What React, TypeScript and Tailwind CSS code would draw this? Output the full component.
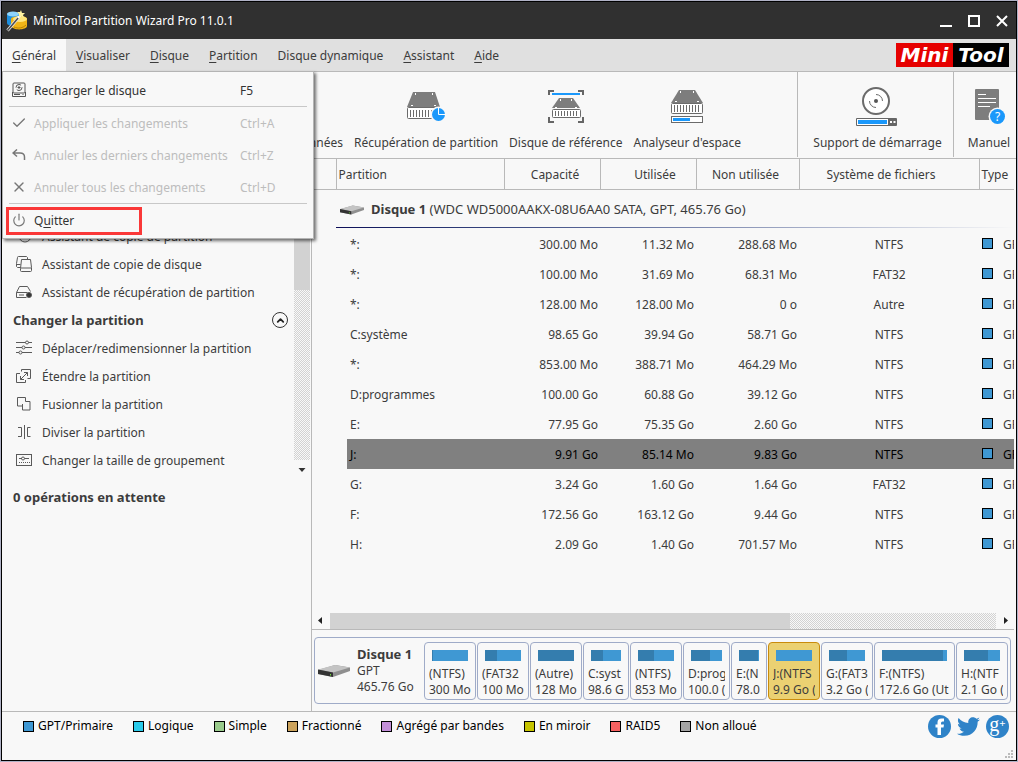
import React from 'react';
import { Check, ChevronUp, Power, X } from 'lucide-react';
import { FaTwitter } from 'react-icons/fa';

interface Volume {
  name: string;
  capacity: string;
  used: string;
  free: string;
  fs: string;
  selected?: boolean;
}

interface Block {
  name: string;
  size: string;
  grow: number;
  used: number;
  selected?: boolean;
}

const volumes: Volume[] = [
  { name: '*:', capacity: '300.00 Mo', used: '11.32 Mo', free: '288.68 Mo', fs: 'NTFS' },
  { name: '*:', capacity: '100.00 Mo', used: '31.69 Mo', free: '68.31 Mo', fs: 'FAT32' },
  { name: '*:', capacity: '128.00 Mo', used: '128.00 Mo', free: '0 o', fs: 'Autre' },
  { name: 'C:système', capacity: '98.65 Go', used: '39.94 Go', free: '58.71 Go', fs: 'NTFS' },
  { name: '*:', capacity: '853.00 Mo', used: '388.71 Mo', free: '464.29 Mo', fs: 'NTFS' },
  { name: 'D:programmes', capacity: '100.00 Go', used: '60.88 Go', free: '39.12 Go', fs: 'NTFS' },
  { name: 'E:', capacity: '77.95 Go', used: '75.35 Go', free: '2.60 Go', fs: 'NTFS' },
  { name: 'J:', capacity: '9.91 Go', used: '85.14 Mo', free: '9.83 Go', fs: 'NTFS', selected: true },
  { name: 'G:', capacity: '3.24 Go', used: '1.60 Go', free: '1.64 Go', fs: 'FAT32' },
  { name: 'F:', capacity: '172.56 Go', used: '163.12 Go', free: '9.44 Go', fs: 'NTFS' },
  { name: 'H:', capacity: '2.09 Go', used: '1.40 Go', free: '701.57 Mo', fs: 'NTFS' },
];

// grow is the relative width of the block, used is a percentage
const blocks: Block[] = [
  { name: '(NTFS)', size: '300 Mo', grow: 52, used: 3 },
  { name: '(FAT32', size: '100 Mo', grow: 52, used: 32 },
  { name: '(Autre)', size: '128 Mo', grow: 52, used: 100 },
  { name: 'C:syst', size: '98.6 G', grow: 46, used: 40 },
  { name: '(NTFS)', size: '853 Mo', grow: 52, used: 45 },
  { name: 'D:prog', size: '100.0 (', grow: 47, used: 61 },
  { name: 'E:(N', size: '78.0', grow: 36, used: 97 },
  { name: 'J:(NTFS', size: '9.9 Go (', grow: 52, used: 0, selected: true },
  { name: 'G:(FAT3', size: '3.2 Go (', grow: 52, used: 50 },
  { name: 'F:(NTFS)', size: '172.6 Go (Ut', grow: 81, used: 94 },
  { name: 'H:(NTF', size: '2.1 Go (', grow: 52, used: 67 },
];

const legend = [
  { label: 'GPT/Primaire', color: 'bg-[#3f98d3]' },
  { label: 'Logique', color: 'bg-[#2bcbea]' },
  { label: 'Simple', color: 'bg-[#9acb8c]' },
  { label: 'Fractionné', color: 'bg-[#cca35c]' },
  { label: 'Agrégé par bandes', color: 'bg-[#c38fd9]' },
  { label: 'En miroir', color: 'bg-[#c6c400]' },
  { label: 'RAID5', color: 'bg-[#f66161]' },
  { label: 'Non alloué', color: 'bg-[#a4a4a4]' },
];

const menus = ['Visualiser', 'Disque', 'Partition', 'Disque dynamique', 'Assistant', 'Aide'];

function AppIcon() {
  return (
    <svg width="22" height="22" viewBox="0 0 22 22">
      <path d="M1 5c0-3 12-5 12 0v9c-4 3-12 2-12-1z" fill="#1d8fe0" />
      <ellipse cx="7" cy="4" rx="6" ry="2.6" fill="#8fd4fb" />
      <path d="M5 9c0-3 16-4 16 0v7c0 4-14 5-16 0z" fill="#f0b517" />
      <ellipse cx="14" cy="9" rx="7" ry="3" fill="#ffe67a" />
      <path d="M8 17c4 2 9 1 12-2" stroke="#b98200" fill="none" />
      <path d="M1.500 20.500L13 7" stroke="#e8e8e8" strokeWidth="3" />
      <path d="M1.500 20.500L13 7" stroke="#4d4d4d" strokeWidth="1.500" />
      <path d="M12 8l3-3.500" stroke="#fff" strokeWidth="2" />
      <path d="M15 0l1 3 3 0-2 2 1 3-3-2-2 1 0-3-2-2 3 0z" fill="#fff3a0" />
    </svg>
  );
}

function Bars({ x, y, count, height }: { x: number; y: number; count: number; height: number }) {
  return (
    <>
      {Array.from({ length: count }, (_, i) => (
        <rect key={i} x={x + i * 3} y={y} width="1" height={height} fill="#6b6b6b" />
      ))}
    </>
  );
}

function RecoverIcon() {
  return (
    <svg width="40" height="40" viewBox="0 0 40 40">
      <path d="M7 6h22l5 15H1z" fill="#7d7d7d" />
      <rect x="1.500" y="21.500" width="32" height="11" rx="1" fill="#fff" stroke="#6b6b6b" />
      <Bars x={4} y={24} count={8} height={7} />
      <path d="M9.500 7v2M26.500 7v2M5 19.500h2M28 19.500h2" stroke="#fff" />
      <circle cx="32.500" cy="28.500" r="8" fill="#f8f8f8" />
      <circle cx="32.500" cy="28.500" r="6.500" fill="#1a98fb" />
      <path d="M32.500 21v7.500h7.500" stroke="#fff" fill="none" />
    </svg>
  );
}

function BenchmarkIcon() {
  return (
    <svg width="40" height="40" viewBox="0 0 40 40">
      <path d="M3 9V5h5M32 5h5v4M3 31v5h5M32 36h5v-5" stroke="#666" strokeWidth="2" fill="none" />
      <rect x="6" y="7" width="28" height="2" fill="#1a98fb" />
      <path d="M13 12h14l7 10H6z" fill="#7d7d7d" />
      <rect x="6.500" y="23.500" width="28" height="8" rx="1" fill="#fff" stroke="#6b6b6b" />
      <Bars x={9} y={25} count={8} height={5} />
      <path d="M14.500 13v2M25.500 13v2M9 21.500h2M29 21.500h2" stroke="#fff" />
    </svg>
  );
}

function SpaceIcon() {
  return (
    <svg width="40" height="40" viewBox="0 0 40 40">
      <path d="M12 4h16l8 13H4z" fill="#7d7d7d" />
      <rect x="4.500" y="17.500" width="31" height="10" rx="1" fill="#fff" stroke="#6b6b6b" />
      <Bars x={7} y={19} count={9} height={7} />
      <path d="M13.500 5v2M26.500 5v2M8 15.500h2M30 15.500h2" stroke="#fff" />
      <rect x="4.500" y="30.500" width="31" height="6" fill="#fff" stroke="#6b6b6b" />
      <rect x="6" y="32" width="17" height="3" fill="#1a98fb" />
    </svg>
  );
}

function BootIcon() {
  return (
    <svg width="44" height="40" viewBox="0 0 44 40">
      <circle cx="21" cy="15" r="13" fill="#fff" stroke="#6b6b6b" strokeWidth="2" />
      <circle cx="21" cy="15" r="2" fill="#555" />
      <path d="M21 8.500a6.500 6.500 0 0 1 6.500 6.500M14.500 15a6.500 6.500 0 0 0 6.500 6.500" fill="none" stroke="#6b6b6b" />
      <rect x="1" y="32" width="41" height="8" rx="1" fill="#666" />
      <rect x="2" y="33" width="31" height="6" fill="#fff" />
      <rect x="3" y="34" width="29" height="4" fill="#1a98fb" />
      <path d="M35 36h2M38.500 36h2" stroke="#fff" strokeWidth="2" />
    </svg>
  );
}

function ManualIcon() {
  return (
    <svg width="40" height="40" viewBox="0 0 40 40">
      <rect x="6" y="3" width="24" height="31" rx="1" fill="#7d7d7d" />
      <path d="M9 8.500h8M9 12.500h18M9 16.500h18M9 20.500h12" stroke="#fff" />
      <circle cx="28.500" cy="30.500" r="9" fill="#f8f8f8" />
      <circle cx="28.500" cy="30.500" r="7.500" fill="#1a98fb" />
      <text x="28.500" y="35" textAnchor="middle" fontSize="12" fill="#fff">?</text>
    </svg>
  );
}

function DriveIcon({ className }: { className?: string }) {
  return (
    <svg className={className} viewBox="0 0 32 12">
      <path d="M0 5L17 0l15 2.500v3.500L15 12 0 9z" fill="#8f8f8f" />
      <path d="M0 4.500L17 0l15 2.500L15 7.500z" fill="#c4c4c4" />
      <path d="M0 4.500L15 7.500V12L0 9z" fill="#333" />
      <path d="M12.500 9v1.500" stroke="#6fdc3c" />
    </svg>
  );
}

function SideIcon({ children }: { children: React.ReactNode }) {
  return (
    <svg width="16" height="16" viewBox="0 0 16 16" fill="none" stroke="#5a5a5a" className="shrink-0">
      {children}
    </svg>
  );
}

const wizards = [
  { label: 'Assistant de copie de partition', icon: <circle cx="9" cy="8" r="6" /> },
  {
    label: 'Assistant de copie de disque',
    icon: (
      <>
        <path d="M4.500 11.500h-3l-1-1v-3l1-6q0-1 1-1h8l1 1v2" />
        <path d="M.5 8.500h4M4.500 12.500l1-9h9l1 8v3q0 1-1 1h-9q-1 0-1-1zM4.500 12h11" />
      </>
    ),
  },
  {
    label: 'Assistant de récupération de partition',
    icon: (
      <>
        <path d="M.5 8.500l3-6h8l3 5M.5 8.500h11M.5 8.500v5h10M3 11h5" />
        <circle cx="13" cy="11" r="2.500" fill="#333" />
      </>
    ),
  },
];

const changes = [
  {
    label: 'Déplacer/redimensionner la partition',
    icon: (
      <>
        <path d="M0 2.500h9.500M12.500 2.500H16M0 7.500h6M9 7.500h7M0 12.500h3M6 12.500h10" />
        <circle cx="11" cy="2.500" r="1.500" />
        <circle cx="7.500" cy="7.500" r="1.500" />
        <circle cx="4.500" cy="12.500" r="1.500" />
      </>
    ),
  },
  {
    label: 'Étendre la partition',
    icon: (
      <>
        <path d="M4 5.500H.5v9h9V12M5.500 3.500v-2h9v9h-3" />
        <path d="M4.500 11.500l7-7M8 4.500h3.500V8M4.500 8v3.500H8" />
      </>
    ),
  },
  {
    label: 'Fusionner la partition',
    icon: <path d="M1.500 1.500h8v4h4.500v8.500H6.500V10h-5zM6.500 10V8" />,
  },
  {
    label: 'Diviser la partition',
    icon: <path d="M2 3.500h3.500v9H2M8.500 1v14M14.500 3.500H11.500v9h3" />,
  },
  {
    label: 'Changer la taille de groupement',
    icon: (
      <>
        <rect x=".5" y="2.500" width="15" height="11" />
        <path d="M3 6.500h3M8.500 6.500H13" />
        <circle cx="7" cy="6.500" r="1.500" />
        <path d="M3 10.500h11" strokeDasharray="1 1" />
      </>
    ),
  },
];

function ReloadIcon() {
  return (
    <svg width="14" height="16" viewBox="0 0 14 16" fill="none" stroke="#555">
      <rect x="1" y="1" width="12" height="10" rx="1" />
      <path d="M.5 10v4.500h13V10M2 12.500h6M10.500 12.500h1" />
      <circle cx="7" cy="5.500" r="3" strokeDasharray="7 2" />
      <path d="M7 4v3M5.500 5.500h3" />
    </svg>
  );
}

function UndoIcon() {
  return (
    <svg width="14" height="12" viewBox="0 0 14 12" fill="none" stroke="currentColor" strokeWidth="1.500">
      <path d="M5 .5L1 4l4 3.500M1.500 4H8q4.500 0 4.500 4v3" />
    </svg>
  );
}

function SideItem({ label, icon }: { label: string; icon: React.ReactNode }) {
  return (
    <li>
      <button className="flex h-7 w-full items-center gap-2.5 pl-3.5 text-left whitespace-nowrap">
        <SideIcon>{icon}</SideIcon>
        <span className="pt-0.5">{label}</span>
      </button>
    </li>
  );
}

interface MenuItemProps {
  icon: React.ReactNode;
  shortcut?: string;
  disabled?: boolean;
  children: React.ReactNode;
}

function MenuItem({ icon, shortcut, disabled, children }: MenuItemProps) {
  return (
    <button
      disabled={disabled}
      className="flex h-8 w-full items-center text-left whitespace-nowrap text-[#333] disabled:text-[#bdbdbd]"
    >
      <span className="flex w-[31px] justify-center text-[#777]">{icon}</span>
      <span className="w-[206px] pt-0.5">{children}</span>
      <span className="pt-0.5">{shortcut}</span>
    </button>
  );
}

function GeneralMenu() {
  return (
    <div className="absolute top-full left-0 z-10 w-[312px] border border-[#b4b4b4] bg-[#f8f8f8] py-0.5 shadow-[2px_2px_3px_rgba(0,0,0,0.55)]">
      <MenuItem icon={<ReloadIcon />} shortcut="F5">Recharger le disque</MenuItem>
      <hr className="mx-1.5 border-[#c8c8c8]" />
      <MenuItem icon={<Check size={16} strokeWidth={2} />} shortcut="Ctrl+A" disabled>Appliquer les changements</MenuItem>
      <MenuItem icon={<UndoIcon />} shortcut="Ctrl+Z" disabled>Annuler les derniers changements</MenuItem>
      <MenuItem icon={<X size={16} strokeWidth={2} />} shortcut="Ctrl+D" disabled>Annuler tous les changements</MenuItem>
      <hr className="mx-1.5 border-[#c8c8c8]" />
      <div className="relative">
        <MenuItem icon={<Power size={14} strokeWidth={2} />}>
          Q<u className="underline-offset-2">u</u>itter
        </MenuItem>
        {/* highlight frame */}
        <div className="pointer-events-none absolute top-[3px] left-[3px] h-7 w-[136px] border-3 border-[#fa3838]" />
      </div>
    </div>
  );
}

function ToolButton({ label, children }: { label: string; children: React.ReactNode }) {
  return (
    <button className="flex flex-col items-center pt-3.5 whitespace-nowrap">
      {children}
      <span className="mt-[7px] leading-5">{label}</span>
    </button>
  );
}

const track =
  'bg-[repeating-conic-gradient(#d2d2d2_0_25%,#f8f8f8_0_50%)] bg-[length:2px_2px]';

function VolumeRow({ v }: { v: Volume }) {
  const bg = v.selected ? 'bg-[#808080] text-black' : '';
  return (
    <tr className="h-[30px]">
      <td className="p-0" />
      <td className="p-0">
        <div className={`ml-[11px] h-[30px] pt-0.5 pl-[3px] leading-7 ${bg}`}>{v.name}</div>
      </td>
      <td className={`p-0 pt-0.5 pr-0.5 text-right ${bg}`}>{v.capacity}</td>
      <td className={`p-0 pt-0.5 pr-0.5 text-right ${bg}`}>{v.used}</td>
      <td className={`p-0 pt-0.5 pr-0.5 text-right ${bg}`}>{v.free}</td>
      <td className={`p-0 pt-0.5 text-center ${bg}`}>{v.fs}</td>
      <td className={`overflow-hidden p-0 ${bg}`}>
        <div className="flex items-center gap-2.5 pl-[3px]">
          <i className="size-[11px] shrink-0 border border-black bg-[#3f98d3]" />
          <span className="pt-0.5">GPT</span>
        </div>
      </td>
    </tr>
  );
}

function DiskMap() {
  return (
    <div className="mt-[7px] mr-[3px] mb-[7px] ml-0.5 flex h-[67px] items-center rounded border border-[#9fabc8] pr-0.5">
      <DriveIcon className="ml-[3px] h-3 w-8 shrink-0" />
      <div className="w-[74px] shrink-0 pl-[7px] leading-4 whitespace-nowrap">
        <b className="text-[13px]">Disque 1</b>
        <div>GPT</div>
        <div>465.76 Go</div>
      </div>
      <div className="flex min-w-0 flex-1 gap-px">
        {blocks.map((b, i) => (
          <div key={i} style={{ flexGrow: b.grow }} className="min-w-0 basis-0">
            <div
              className={`h-[58px] rounded border px-1 pt-[7px] leading-4 whitespace-nowrap ${
                b.selected ? 'border-[#c98b0c] bg-[#ebd172]' : 'border-[#9fabc8]'
              }`}
            >
              <div className="mx-[3px] mb-[5px] h-[11px] bg-[#3f98d3]">
                <div className="h-full bg-[#347dae]" style={{ width: `${b.used}%` }} />
              </div>
              <div className="overflow-hidden">{b.name}</div>
              <div className="overflow-hidden">{b.size}</div>
            </div>
          </div>
        ))}
      </div>
    </div>
  );
}

function App() {
  return (
    <div className="flex min-h-screen flex-col bg-[#b0b2c6] p-px font-['Noto_Sans',sans-serif] text-[12px] text-[#3c3c3c]">
      <div className="flex flex-1 flex-col border border-black bg-[#f8f8f8]">
        {/* Title bar */}
        <header className="flex h-[37px] shrink-0 items-center bg-[#303030] pr-2 pl-1 text-white">
          <AppIcon />
          <h1 className="ml-[5px] flex-1">MiniTool Partition Wizard Pro 11.0.1</h1>
          <div className="flex items-center gap-4">
            <button aria-label="Réduire" className="flex h-3 w-3 items-end">
              <span className="h-0.5 w-3 bg-white" />
            </button>
            <button aria-label="Agrandir" className="size-3 border-2 border-white" />
            <button aria-label="Fermer">
              <svg width="12" height="12" viewBox="0 0 12 12" stroke="#fff" strokeWidth="2">
                <path d="M1 1l10 10M11 1L1 11" />
              </svg>
            </button>
          </div>
        </header>

        {/* Menu bar */}
        <nav className="flex h-[33px] shrink-0 border-b border-[#b9b9b9] bg-[#e0e0e0]">
          <div className="relative">
            <button className="h-8 w-16 bg-[#f8f8f8] pt-0.5">
              <span className="underline underline-offset-2">G</span>énéral
            </button>
            <GeneralMenu />
          </div>
          {menus.map((m) => (
            <button key={m} className="h-8 px-2.5 pt-0.5 whitespace-nowrap">
              {m === 'Disque dynamique' ? (
                m
              ) : (
                <>
                  <span className="underline underline-offset-2">{m[0]}</span>
                  {m.slice(1)}
                </>
              )}
            </button>
          ))}
          <div className="mt-1 mr-[7px] ml-auto flex h-6 font-['DejaVu_Sans',sans-serif] text-[20px] leading-6 font-bold text-white italic">
            <span className="w-[57px] bg-[#e60000] text-center">Mini</span>
            <span className="w-14 bg-black text-center">Tool</span>
          </div>
        </nav>

        {/* Toolbar */}
        <div className="flex h-[87px] shrink-0 border-b border-[#b9b9b9]">
          <div className="flex min-w-0 flex-1 gap-[11px] overflow-hidden">
            <div className="flex w-[341px] shrink-0 justify-end">
              <ToolButton label="Récupération de données">
                <RecoverIcon />
              </ToolButton>
            </div>
            <ToolButton label="Récupération de partition">
              <RecoverIcon />
            </ToolButton>
            <ToolButton label="Disque de référence">
              <BenchmarkIcon />
            </ToolButton>
            <ToolButton label="Analyseur d'espace">
              <SpaceIcon />
            </ToolButton>
          </div>
          <div className="mb-px flex w-[156px] justify-center border-l border-[#b9b9b9] pl-1">
            <ToolButton label="Support de démarrage">
              <BootIcon />
            </ToolButton>
          </div>
          <div className="mb-px flex w-[63px] justify-center border-l border-[#b9b9b9] pl-2">
            <ToolButton label="Manuel">
              <ManualIcon />
            </ToolButton>
          </div>
        </div>

        <div className="flex flex-1">
          {/* Sidebar */}
          <aside className="flex w-[310px] shrink-0 flex-col border-r border-[#b9b9b9]">
            <div className="flex">
              <div className="flex-1 pt-[63px]">
                <ul>
                  {wizards.map((w) => (
                    <SideItem key={w.label} {...w} />
                  ))}
                </ul>
                <div className="flex h-7 items-center justify-between pr-1.5 pl-[11px]">
                  <h2 className="pt-0.5 text-[13px] font-bold">Changer la partition</h2>
                  <button
                    aria-label="Replier"
                    className="flex size-4 items-center justify-center rounded-full border border-[#333] text-[#222]"
                  >
                    <ChevronUp size={11} strokeWidth={4} />
                  </button>
                </div>
                <ul>
                  {changes.map((c) => (
                    <SideItem key={c.label} {...c} />
                  ))}
                </ul>
              </div>
              <div className="mr-px flex w-4 flex-col items-center">
                <div className="h-[131px] w-4 bg-[#d2d2d2]" />
                <div className={`w-4 flex-1 ${track}`} />
                <svg width="8" height="14" viewBox="0 0 8 14">
                  <path d="M0.500 8h7L4 12z" fill="#333" />
                </svg>
              </div>
            </div>
            <h2 className="mt-[13px] pl-[11px] text-[13px] leading-5 font-bold">0 opérations en attente</h2>
          </aside>

          {/* Partition list */}
          <main className="mr-0.5 flex min-w-0 flex-1 flex-col">
            <div className="flex-1 overflow-hidden">
              <table className="w-full table-fixed border-collapse whitespace-nowrap">
                <colgroup>
                  <col className="w-6" />
                  <col className="w-[168px]" />
                  <col className="w-24" />
                  <col className="w-24" />
                  <col className="w-[103px]" />
                  <col className="w-[180px]" />
                  <col />
                </colgroup>
                <thead>
                  <tr className="h-[30px] border-b border-[#b9b9b9] *:border-r *:border-[#b9b9b9] *:p-0 *:pt-0.5 *:font-normal *:last:border-r-0">
                    <th />
                    <th className="text-left">
                      <span className="pl-0.5">Partition</span>
                    </th>
                    <th>
                      <span className="pl-1.5">Capacité</span>
                    </th>
                    <th>
                      <span className="pl-3.5">Utilisée</span>
                    </th>
                    <th>
                      <span className="pr-1">Non utilisée</span>
                    </th>
                    <th>
                      <span className="pr-4">Système de fichiers</span>
                    </th>
                    <th className="text-left">
                      <span className="pl-0.5">Type</span>
                    </th>
                  </tr>
                </thead>
                <tbody>
                  <tr>
                    <td className="p-0" />
                    <td colSpan={6} className="p-0">
                      <div className="flex h-[37px] items-center gap-[7px] pt-1 pl-1 text-[13px]">
                        <DriveIcon className="h-2.5 w-6" />
                        <span>
                          <b>Disque 1</b> (WDC WD5000AAKX-08U6AA0 SATA, GPT, 465.76 Go)
                        </span>
                      </div>
                      <div className="mb-px h-px bg-linear-to-r from-[#0e0e58] to-[#f8f8f8]" />
                    </td>
                  </tr>
                  {volumes.map((v, i) => (
                    <VolumeRow key={i} v={v} />
                  ))}
                </tbody>
              </table>
            </div>
            <div className="flex h-[17px] items-center border-b border-[#b9b9b9]">
              <svg width="18" height="16" viewBox="0 0 18 16">
                <path d="M10 4v7L6 7.500z" fill="#222" />
              </svg>
              <div className={`flex h-4 flex-1 ${track}`}>
                <div className="w-[69%] bg-[#d2d2d2]" />
              </div>
              <svg width="18" height="16" viewBox="0 0 18 16">
                <path d="M8 4v7l4-3.500z" fill="#222" />
              </svg>
            </div>
            <DiskMap />
          </main>
        </div>

        {/* Legend */}
        <footer className="flex h-[49px] shrink-0 flex-col border-t border-[#b9b9b9] text-black">
          <div className="flex h-7 items-center pr-[7px] pl-[21px]">
            <ul className="flex flex-1 gap-5 whitespace-nowrap">
              {legend.map((l) => (
                <li key={l.label} className="flex items-center gap-1">
                  <i className={`size-[11px] border border-black ${l.color}`} />
                  {l.label}
                </li>
              ))}
            </ul>
            <div className="flex items-center gap-1.5">
              <a href="#facebook" aria-label="Facebook">
                <svg width="23" height="23" viewBox="0 0 23 23">
                  <circle cx="11.500" cy="11.500" r="11.500" fill="#2f83c8" />
                  <path
                    d="M9.500 20v-7.500H7.500V9.500h2V7.500q0-4 4-4h2.500v3h-1.500q-1.500 0-1.500 1.500v1.500h3l-.5 3H13V20z"
                    fill="#fff"
                  />
                </svg>
              </a>
              <a href="#twitter" aria-label="Twitter" className="text-[#2f83c8]">
                <FaTwitter size={23} />
              </a>
              <a
                href="#google"
                aria-label="Google+"
                className="flex size-[23px] items-center justify-center rounded-full bg-[#2f83c8] font-['Liberation_Serif',serif] text-[20px] leading-none text-white"
              >
                <span className="pb-1">g</span>
                <span className="pb-1.5 text-[11px] font-bold">+</span>
              </a>
            </div>
          </div>
          <svg className="mt-2.5 mr-[3px] self-end" width="8" height="8" viewBox="0 0 8 8" fill="#bbb">
            <path d="M6 0h2v2H6zM3 3h2v2H3zM6 3h2v2H6zM0 6h2v2H0zM3 6h2v2H3zM6 6h2v2H6z" />
          </svg>
        </footer>
      </div>
    </div>
  );
}

export default App;
